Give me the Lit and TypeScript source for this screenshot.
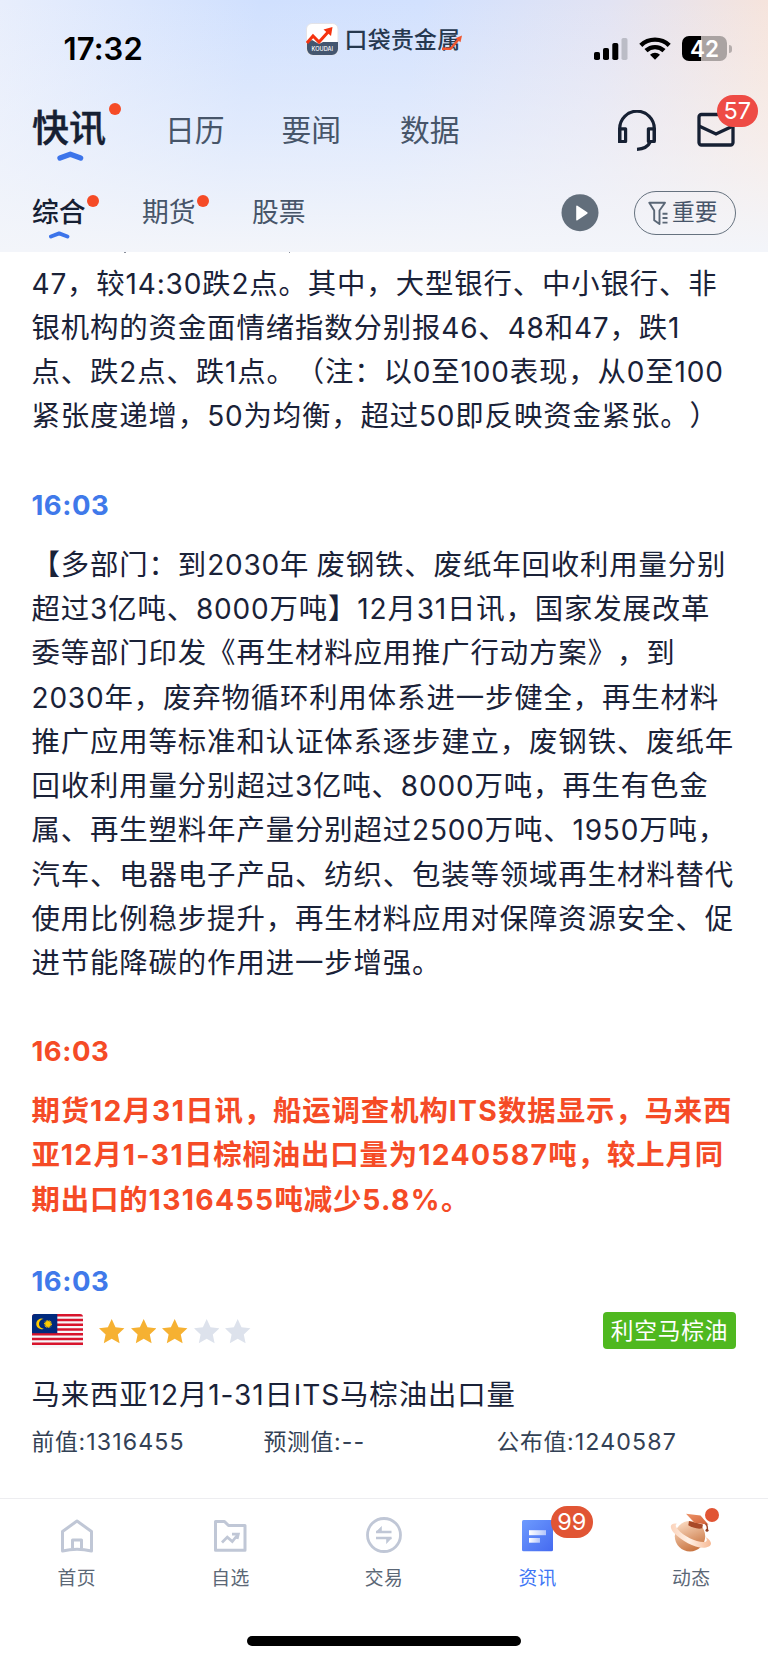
import { LitElement, html, css, svg } from "lit";
import { customElement, property } from "lit/decorators.js";
import { classMap } from "lit/directives/class-map.js";

const FONT = css`"Noto Sans CJK SC", "Inter", sans-serif`;

const mixed = css`
  .ln { display: block; white-space: pre; text-spacing-trim: space-all; }
  .lat { font-family: "Inter", sans-serif; line-height: 0; }
`;

/** Splits a line so that Latin letters and digits get their own face. */
const mix = (text: string) =>
  text
    .split(/([0-9A-Za-z:%.\-]+)/)
    .map((part, i) => (i % 2 ? html`<span class="lat">${part}</span>` : part));

@customElement("status-bar")
class StatusBar extends LitElement {
  static styles = css`
    :host { display: grid; grid-template-columns: 306px 1fr auto; height: 72px; box-sizing: border-box; padding-right: 36px; font-family: ${FONT}; }
    .time { font: 600 31px/36px "Inter", sans-serif; padding: 31px 0 0 63.5px; letter-spacing: 0.1px; color: #000; }
    .brand { display: flex; gap: 5.5px; padding-top: 23px; align-items: flex-start; }
    .word { position: relative; font-size: 22.8px; line-height: 31px; height: 31px; letter-spacing: 0.4px; color: #26384f; font-weight: 500; }
    .swoosh { position: absolute; left: 97px; top: 12px; }
    .sys { display: flex; gap: 11px; padding-top: 36px; align-items: flex-start; }
    .bat { display: flex; align-items: center; }
    .cell { width: 45px; height: 25px; border-radius: 7px; background: linear-gradient(90deg, #000 42%, #aaa3a2 42%); color: #fff; font: 600 22.5px/25px "Inter", sans-serif; text-align: center; }
    .nub { width: 3px; height: 8px; margin-left: 2px; border-radius: 0 3px 3px 0; background: #b5adac; }
    svg { display: block; }
  `;
  render() {
    return html`
      <div class="time">17:32</div>
      <div class="brand">
        <svg width="33" height="33" viewBox="0 0 33 33">
          <rect x="0.5" y="0.5" width="31.5" height="31.5" rx="5.5" fill="#fff" stroke="#e3e3e8" />
          <path d="M1 20 L6 17 L13 21 L17 19 H32 V26 a6 6 0 0 1-6 6 H7 a6 6 0 0 1-6-6 Z" fill="#44566f" />
          <path d="M1 20 L7 13 L13 19 L23 8" fill="none" stroke="#f5330f" stroke-width="3" />
          <path d="M17.5 6.5 L26.5 4 L25 13 Z" fill="#f5330f" />
          <text x="16.3" y="28" font-size="5.6" font-weight="500" font-family="Inter" fill="#fff" text-anchor="middle">KOUDAI</text>
        </svg>
        <div class="word">口袋贵金属<svg class="swoosh" width="22" height="18" viewBox="0 0 22 18">
          <path d="M0 13.8 H8.5 L17 4" fill="none" stroke="#f0562f" stroke-width="2.4" />
          <path d="M13.5 3.2 L20 0.5 L18.5 7.2 Z" fill="#f0562f" />
        </svg></div>
      </div>
      <div class="sys">
        <svg width="34" height="25" viewBox="0 0 34 25">
          <rect x="0" y="16" width="6" height="8" rx="1.8" />
          <rect x="9" y="12" width="6" height="12" rx="1.8" />
          <rect x="18.3" y="7" width="6" height="17" rx="1.8" />
          <rect x="27.5" y="2" width="6" height="22" rx="1.8" fill="#bbbcc6" />
        </svg>
        <svg width="32" height="25" viewBox="0 0 32 25" fill="none" stroke="#000" stroke-width="4.4">
          <path d="M1.8 9.3 A20.5 20.5 0 0 1 30.2 9.3" />
          <path d="M7 14.7 A13 13 0 0 1 25 14.7" />
          <path d="M16 23.8 L11 18.8 A7.2 7.2 0 0 1 21 18.8 Z" fill="#000" stroke="none" />
        </svg>
        <div class="bat"><div class="cell">42</div><div class="nub"></div></div>
      </div>`;
  }
}

@customElement("top-tabs")
class TopTabs extends LitElement {
  static styles = css`
    :host { display: block; font-family: ${FONT}; color: #475569; }
    .main { display: grid; grid-template-columns: 133px 116.5px 118.5px 1fr auto; height: 100px; padding: 0 33px 0 32px; box-sizing: border-box; }
    .t { font-size: 29.8px; line-height: 40px; padding-top: 36px; white-space: nowrap; }
    .on { font-size: 37px; font-weight: 500; -webkit-text-stroke: 0.4px #162033; line-height: 48px; padding-top: 29.5px; color: #162033; }
    .rel { position: relative; display: inline-block; }
    .dot { position: absolute; width: 12px; height: 12px; border-radius: 50%; background: #f54b26; }
    .main .dot { left: 76.5px; top: 1px; }
    .main .chev { position: absolute; left: 25px; top: 48.5px; }
    .tools { display: flex; gap: 41px; padding-top: 38px; }
    .mail { position: relative; }
    .badge { position: absolute; left: 19.5px; top: -15.5px; width: 41.5px; height: 32px; border-radius: 16px; background: #ee4b45; color: #fff; font: 400 23.5px/32px "Inter", sans-serif; text-align: center; }
    .sub { display: grid; grid-template-columns: 110px 110px 1fr auto auto; height: 80px; padding: 0 32px; box-sizing: border-box; }
    .s { font-size: 26.8px; line-height: 36px; padding-top: 21px; }
    .son { color: #162033; font-weight: 500; }
    .sub .dot { left: 54.7px; top: 1.5px; }
    .sub .chev { position: absolute; left: 17px; top: 37px; }
    .play { margin: 22px 35px 0 0; }
    .pill { margin-top: 19px; width: 102px; height: 44px; box-sizing: border-box; border: 1.2px solid #66727f; border-radius: 22px; display: flex; align-items: center; padding-left: 13px; gap: 4px; font-size: 22.7px; line-height: 30px; }
    .pill span { margin-top: -4px; }
    svg { display: block; }
  `;
  render() {
    return html`
      <div class="main">
        <div class="t on"><span class="rel">快讯<i class="dot"></i>
          <svg class="chev" width="27" height="12" viewBox="0 0 27 12"><path d="M3 8 L13.3 4.2 L23.6 8" fill="none" stroke="#3c74ea" stroke-width="5.4" stroke-linecap="round" stroke-linejoin="round" /></svg></span></div>
        <div class="t">日历</div>
        <div class="t">要闻</div>
        <div class="t">数据</div>
        <div class="tools">
          <svg width="38" height="42" viewBox="0 0 38 42" fill="none" stroke="#162033" stroke-width="3.2">
            <path d="M1.7 33 V18.5 A17.3 17.3 0 0 1 36.3 18.5 V31" />
            <path d="M1.7 18.8 H7.6 V31.5 H1.7 Z M36.3 18.8 H30.4 V31.5 H36.3 Z" stroke-linejoin="round" />
            <path d="M32.5 31.5 Q29 39 19 39.3" />
          </svg>
          <div class="mail">
            <svg width="38" height="38" viewBox="0 0 38 38" fill="none" stroke="#162033" stroke-width="3.3">
              <rect x="2" y="4.5" width="34" height="30.5" rx="2.5" />
              <path d="M2 16 L19 24 L36 16" />
            </svg>
            <span class="badge">57</span>
          </div>
        </div>
      </div>
      <div class="sub">
        <div class="s son"><span class="rel">综合<i class="dot"></i>
          <svg class="chev" width="21" height="10" viewBox="0 0 21 10"><path d="M2 6.5 L10.2 3.4 L18.4 6.5" fill="none" stroke="#3c74ea" stroke-width="4" stroke-linecap="round" stroke-linejoin="round" /></svg></span></div>
        <div class="s"><span class="rel">期货<i class="dot"></i></span></div>
        <div class="s">股票</div>
        <svg class="play" width="38" height="38" viewBox="0 0 38 38"><circle cx="19" cy="18.7" r="18.5" fill="#626e7b" /><path d="M16 12.3 L25.8 19 L16 25.7 Z" fill="#fff" stroke="#fff" stroke-width="1.6" stroke-linejoin="round" /></svg>
        <div class="pill">
          <svg width="20" height="24" viewBox="0 0 20 24" fill="none" stroke="#5a6776" stroke-width="1.9">
            <path d="M1.3 1.7 H17 L11.5 9.5 V23 L6.2 19.3 V9.5 Z" stroke-linejoin="round" />
            <path d="M14.5 12.8 H19.5 M14.5 17 H19.5 M14.5 21.6 H19.5" />
          </svg><span>重要</span></div>
      </div>`;
  }
}

@customElement("news-item")
class NewsItem extends LitElement {
  @property() time = "";
  @property({ attribute: false }) lines: string[] = [];
  @property({ type: Boolean }) hot = false;
  static styles = [mixed, css`
    :host { display: block; font-family: ${FONT}; color: #1a2238; }
    .time { font: 700 27.5px/32px "Inter", sans-serif; color: #4079ea; margin-bottom: 20px; letter-spacing: 0.5px; }
    .ln { font-size: 28.4px; height: 44.3px; line-height: 44.3px; letter-spacing: 0.88px; }
    .lat { font-size: 28px; letter-spacing: 0.8px; }
    .hot, .hot .time { color: #f54b26; }
    .hot .ln { font-weight: 700; }
    .hot .lat { font-weight: 700; font-size: 28.3px; letter-spacing: 1.35px; }
  `];
  render() {
    return html`<div class=${classMap({ hot: this.hot })}>
      ${this.time ? html`<div class="time">${this.time}</div>` : ""}
      ${this.lines.map((l) => html`<span class="ln">${mix(l)}</span>`)}
    </div>`;
  }
}

const STAR = "M12.7 0 L16.5 8.3 L25.4 9.3 L18.8 15.4 L20.6 24.2 L12.7 19.8 L4.8 24.2 L6.6 15.4 L0 9.3 L8.9 8.3 Z";

@customElement("data-item")
class DataItem extends LitElement {
  static styles = [mixed, css`
    :host { display: block; font-family: ${FONT}; color: #1a2238; }
    .time { font: 700 27.5px/32px "Inter", sans-serif; color: #4079ea; letter-spacing: 0.5px; }
    .row { display: flex; align-items: center; height: 37px; margin-top: 15.2px; }
    .flag { margin-top: 1.5px; }
    .stars { display: flex; gap: 6.1px; margin-left: 16.8px; flex: 1; padding-top: 3px; }
    .tag { width: 133.5px; height: 37px; border-radius: 4px; background: #4fb81f; color: #fff; font-size: 22.7px; line-height: 35px; letter-spacing: 0.8px; text-align: center; text-indent: 0.5px; margin-right: 0.5px; }
    .title { font-size: 28.4px; line-height: 44px; height: 44px; margin-top: 22.5px; letter-spacing: 0.9px; }
    .title .lat { font-size: 28px; letter-spacing: 0.9px; }
    .vals { display: grid; grid-template-columns: 232px 233px 1fr; margin-top: 10px; font-size: 22.8px; line-height: 32px; color: #334155; letter-spacing: 0.7px; }
    .vals .lat { font-size: 23.2px; letter-spacing: 1.1px; }
    svg { display: block; }
  `];
  render() {
    return html`
      <div class="time">16:03</div>
      <div class="row">
        <svg class="flag" width="51" height="34" viewBox="0 0 51 34">
          <defs><clipPath id="r"><rect width="51" height="34" rx="3" /></clipPath></defs>
          <g clip-path="url(#r)">
            <rect width="51" height="34" fill="#f7f7fa" />
            ${[0, 1, 2, 3, 4, 5, 6].map((i) => svg`<rect y=${i * 4.75} width="51" height="2.5" fill="#d8142c" />`)}
            <rect width="25.3" height="19.2" fill="#012a7d" />
            <path d="M11.8 5.1 A5.3 5.3 0 1 0 11.8 14.7 A4.8 4.8 0 1 1 11.8 5.1 Z" fill="#fc0" />
            <circle cx="16" cy="10" r="2.9" fill="#fc0" />
            <circle cx="16" cy="10" r="3.4" fill="none" stroke="#fc0" stroke-width="1.2" stroke-dasharray="0.8 0.7" />
          </g>
        </svg>
        <div class="stars">
          ${[1, 1, 1, 0, 0].map((f) => html`<svg width="25.4" height="25" viewBox="0 0 25.4 25"><path d=${STAR} fill=${f ? "#f6b132" : "#dde2ec"} /></svg>`)}
        </div>
        <div class="tag">利空马棕油</div>
      </div>
      <div class="title ln">${mix("马来西亚12月1-31日ITS马棕油出口量")}</div>
      <div class="vals">
        <span class="ln">${mix("前值:1316455")}</span>
        <span class="ln">${mix("预测值:--")}</span>
        <span class="ln">${mix("公布值:1240587")}</span>
      </div>`;
  }
}

@customElement("tab-bar")
class TabBar extends LitElement {
  static styles = css`
    :host { display: flex; flex-direction: column; height: 165px; box-sizing: border-box; border-top: 1px solid #ededf0; font-family: ${FONT}; background: #fff; }
    .tabs { display: grid; grid-template-columns: repeat(5, 1fr); height: 137px; }
    .tab { display: flex; flex-direction: column; align-items: center; padding-top: 15px; color: #5b6776; font-size: 18.8px; line-height: 26px; letter-spacing: 0.4px; }
    .active { color: #3f76f6; }
    .ico { position: relative; height: 42px; margin-bottom: 8px; }
    .badge { position: absolute; left: 34.5px; top: -8.5px; width: 41.5px; height: 32px; border-radius: 16px; background: #e15534; color: #fff; font: 400 23.5px/32px "Inter", sans-serif; text-align: center; letter-spacing: 0; }
    .dot { position: absolute; left: 34.5px; top: -6.5px; width: 14px; height: 14px; border-radius: 50%; background: #e15534; }
    .home { width: 274px; height: 10px; border-radius: 5px; background: #000; align-self: center; }
    svg { display: block; }
  `;
  icons = [
    svg`<g fill="none" stroke="#c0c7d6" stroke-width="3" stroke-linejoin="round"><path d="M21 7 L35.5 17.5 V37 Q21 33.5 6.5 37 V17.5 Z" /><path d="M16.5 34.5 V26 H25.5 V34.5" /></g>`,
    svg`<g fill="none" stroke="#c0c7d6" stroke-width="3" stroke-linejoin="round"><path d="M6.5 7.5 H15.5 L19.5 11.5 H36 V36.3 H6.5 Z" /><path d="M13 28.5 L18.3 23.1 L23.3 27.5 L28.5 21" stroke-width="2.8" stroke-linejoin="miter" /><path d="M23 20.1 H29.3 L28.1 25" stroke-width="2.8" stroke-linejoin="miter" /></g>`,
    svg`<g fill="none" stroke="#c0c7d6" stroke-width="2.8"><circle cx="21" cy="21" r="16.5" /><path d="M13 18 H28.5 M13 24 H28.5" stroke-width="2.6" /><path d="M13 18 L18.5 12.5 V18 Z M28.5 24 L23.5 29.5 V24 Z" fill="#c0c7d6" stroke-width="0.6" /></g>`,
    svg`<defs><linearGradient id="b" x2="1" y2="1"><stop stop-color="#6d9bfe" /><stop offset="1" stop-color="#456af0" /></linearGradient><linearGradient id="w"><stop stop-color="#fff" /><stop offset="1" stop-color="#fff" stop-opacity="0.55" /></linearGradient></defs><rect x="5" y="6" width="31" height="31.3" rx="1.5" fill="url(#b)" /><rect x="12" y="16.2" width="17" height="5" fill="url(#w)" /><rect x="12" y="24" width="11" height="4.7" fill="url(#w)" />`,
    svg`<defs><linearGradient id="p" x1="0.2" x2="0.6" y2="1"><stop stop-color="#fbdcc3" /><stop offset="1" stop-color="#c8733f" /></linearGradient><linearGradient id="q" x2="1" y2="1"><stop stop-color="#ee9468" /><stop offset="1" stop-color="#cf5f36" /></linearGradient><linearGradient id="g"><stop stop-color="#fbd3bb" /><stop offset="0.45" stop-color="#fff1e6" /><stop offset="1" stop-color="#f7b994" /></linearGradient></defs>
      <circle cx="20" cy="22.3" r="15.2" fill="url(#p)" />
      <path d="M7 9.8 C0.5 8.5 -1.5 13 4 19 C12.5 27.5 26 35 36 33.5 C43 32.5 42.5 27 35.5 23 C37.5 25.5 37.5 28 33.5 28 C25.5 28 13.5 22 8 15.5 C5.5 12.5 5 11 7 9.8 Z" fill="url(#g)" />
      <path d="M19 7 L33 10.5 L32.2 14.3 C28 15.5 21.5 13.5 18.3 11.3 Z" fill="#a84a28" />
      <path d="M16 -0.3 L30.5 1.5 L38.5 10.8 L24.5 8.8 Z" fill="url(#q)" />
      <path d="M35.5 9.8 Q38 11.5 37.2 16" fill="none" stroke="#9c4527" stroke-width="1.4" /><circle cx="37" cy="16.2" r="1.5" fill="#8f3c20" />`,
  ];
  render() {
    return html`
      <div class="tabs">
        ${["首页", "自选", "交易", "资讯", "动态"].map((name, i) => html`
          <div class=${classMap({ tab: true, active: i === 3 })}>
            <div class="ico">
              <svg width="42" height="42" viewBox="0 0 42 42" overflow="visible">${this.icons[i]}</svg>
              ${i === 3 ? html`<span class="badge">99</span>` : i === 4 ? html`<i class="dot"></i>` : ""}
            </div>
            ${name}
          </div>`)}
      </div>
      <div class="home"></div>`;
  }
}

@customElement("app-root")
class AppRoot extends LitElement {
  static styles = css`
    :host { display: flex; flex-direction: column; width: 768px; height: 1663px; background: #fff; overflow: hidden; }
    .head { height: 252px; flex: none; background: linear-gradient(180deg, rgba(244,246,251,0) 0, rgba(244,246,251,0.5) 55%, #f3f5fa 100%), linear-gradient(100deg, #e8eefc 0%, #d0e0fe 32%, #d2e1fe 52%, #e2e3f3 75%, #fbe4d6 100%); }
    .feed { flex: 1; padding: 0 31.5px; }
    .peek { display: flex; gap: 163px; height: 7.5px; padding-left: 92.5px; }
    .peek i { width: 1.5px; height: 1px; background: #8a8f9b; }
    .first { margin-bottom: 52px; }
    .second { margin-bottom: 51.5px; }
    .third { margin-bottom: 44.5px; }
  `;
  a = ["47，较14:30跌2点。其中，大型银行、中小银行、非", "银机构的资金面情绪指数分别报46、48和47，跌1", "点、跌2点、跌1点。（注：以0至100表现，从0至100", "紧张度递增，50为均衡，超过50即反映资金紧张。）"];
  b = ["【多部门：到2030年 废钢铁、废纸年回收利用量分别", "超过3亿吨、8000万吨】12月31日讯，国家发展改革", "委等部门印发《再生材料应用推广行动方案》，到", "2030年，废弃物循环利用体系进一步健全，再生材料", "推广应用等标准和认证体系逐步建立，废钢铁、废纸年", "回收利用量分别超过3亿吨、8000万吨，再生有色金", "属、再生塑料年产量分别超过2500万吨、1950万吨，", "汽车、电器电子产品、纺织、包装等领域再生材料替代", "使用比例稳步提升，再生材料应用对保障资源安全、促", "进节能降碳的作用进一步增强。"];
  c = ["期货12月31日讯，船运调查机构ITS数据显示，马来西", "亚12月1-31日棕榈油出口量为1240587吨，较上月同", "期出口的1316455吨减少5.8%。"];
  render() {
    return html`
      <div class="head"><status-bar></status-bar><top-tabs></top-tabs></div>
      <div class="feed">
        <div class="peek"><i></i><i></i></div>
        <news-item class="first" .lines=${this.a}></news-item>
        <news-item class="second" time="16:03" .lines=${this.b}></news-item>
        <news-item class="third" time="16:03" hot .lines=${this.c}></news-item>
        <data-item></data-item>
      </div>
      <tab-bar></tab-bar>`;
  }
}
